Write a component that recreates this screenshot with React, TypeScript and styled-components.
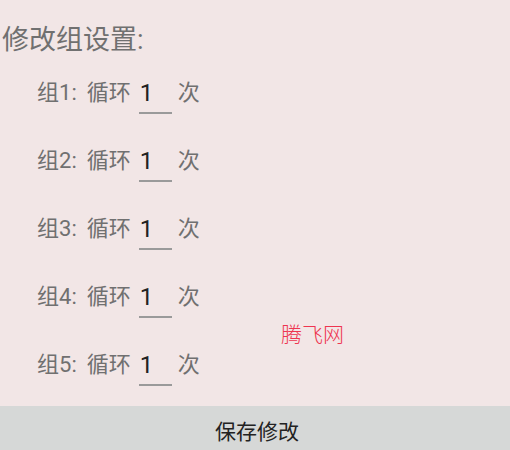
import React from "react";
import styled, { createGlobalStyle } from "styled-components";

const Global = createGlobalStyle`
  html, body { margin: 0; padding: 0; }
  body {
    background: #f2e6e6;
    font-family: Roboto, "Noto Sans CJK SC", sans-serif;
  }
`;

const Screen = styled.div`
  position: relative;
  width: 510px;
  height: 450px;
  display: flex;
  flex-direction: column;
  background: #f2e6e6;
  overflow: hidden;
`;

const Content = styled.div`
  flex: 1;
  display: flex;
  flex-direction: column;
`;

const Title = styled.div`
  height: 59px;
  box-sizing: border-box;
  padding: 23px 0 0 2px;
  font-size: 27px;
  line-height: 34px;
  color: #707070;
`;

const Row = styled.div`
  height: 68px;
  display: flex;
  align-items: center;
  padding-left: 37px;
  font-size: 22px;
  color: #707070;
`;

const Label = styled.span`
  line-height: 30px;
`;

const Loop = styled.span`
  margin-left: 10px;
  line-height: 30px;
`;

const Field = styled.div`
  position: relative;
  width: 33px;
  height: 68px;
  margin-left: 8px;
  padding-left: 1px;
  box-sizing: border-box;
  display: flex;
  align-items: center;
  color: #222;
  font-size: 24px;
  &::after {
    content: "";
    position: absolute;
    left: 0;
    right: 0;
    top: 53px;
    height: 2px;
    background: #9a9a9a;
  }
`;

const Unit = styled.span`
  margin-left: 6px;
  line-height: 30px;
`;

const Watermark = styled.div`
  position: absolute;
  left: 281px;
  top: 321px;
  font-size: 21px;
  font-weight: 300;
  color: #ee3550;
  line-height: 28px;
`;

const SaveButton = styled.button`
  height: 44px;
  border: none;
  margin: 0;
  padding: 3px 0 0 4px;
  background: #d6d8d7;
  color: #222;
  font-family: Roboto, "Noto Sans CJK SC", sans-serif;
  font-size: 21px;
  display: flex;
  align-items: center;
  justify-content: center;
`;

const groups = [1, 2, 3, 4, 5];

export default function App() {
  return (
    <>
      <Global />
      <Screen>
        <Content>
          <Title>修改组设置:</Title>
          {groups.map((g) => (
            <Row key={g}>
              <Label>组{g}:</Label>
              <Loop>循环</Loop>
              <Field>1</Field>
              <Unit>次</Unit>
            </Row>
          ))}
        </Content>
        <SaveButton>保存修改</SaveButton>
        <Watermark>腾飞网</Watermark>
      </Screen>
    </>
  );
}
